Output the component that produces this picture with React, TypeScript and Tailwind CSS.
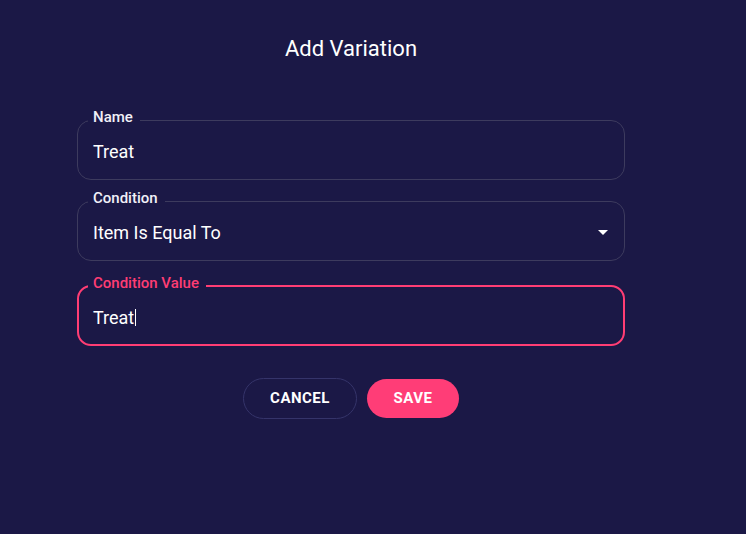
import { ReactNode } from "react";

const Field = ({
  label,
  focused = false,
  children,
}: {
  label: string;
  focused?: boolean;
  children: ReactNode;
}) => (
  <fieldset
    className={
      focused
        ? "rounded-[14px] border-2 border-[#ff3d74] pl-[14px] pr-[14px] pt-0 pb-[7px] m-0 min-w-0"
        : "rounded-[14px] border border-[#3d3b5e] pl-[15px] pr-[9px] pt-0 pb-[8px] m-0 min-w-0"
    }
  >
    <legend
      className={
        "ml-[-5px] pl-[5px] pr-[7px] pb-[6px] text-[15px] leading-4 font-medium " +
        (focused ? "text-[#ff3d74]" : "text-[#f1f0f8]")
      }
    >
      {label}
    </legend>
    <div className="h-[40px] flex items-center justify-between text-[18px] text-white">
      {children}
    </div>
  </fieldset>
);

export default function App() {
  return (
    <div
      className="w-full h-[534px] bg-[#1b1846] text-white"
      style={{ fontFamily: "Roboto, 'Liberation Sans', sans-serif" }}
    >
      <div className="ml-[77px] w-[548px] pt-[35px]">
        <h1 className="text-center text-[22px] leading-[28px] font-normal">Add Variation</h1>

        <div className="mt-[46px]">
          <Field label="Name">
            <span>Treat</span>
          </Field>
        </div>

        <div className="mt-[10px]">
          <Field label="Condition">
            <span>Item Is Equal To</span>
            <svg width="24" height="24" viewBox="0 0 24 24" fill="white">
              <path d="M7 10l5 5 5-5z" />
            </svg>
          </Field>
        </div>

        <div className="mt-[14px]">
          <Field label="Condition Value" focused>
            <span className="flex items-center">
              Treat
              <span className="inline-block w-px h-[17px] bg-white ml-[1px]" />
            </span>
          </Field>
        </div>

        <div className="mt-[32px] flex items-center justify-center gap-[10px]">
          <button className="h-[41px] w-[114px] rounded-full border border-[#35346a] text-[15px] font-bold tracking-[0.5px] text-white">
            CANCEL
          </button>
          <button className="h-[39px] w-[92px] rounded-full bg-[#ff3d77] text-[15px] font-bold tracking-[0.5px] text-white">
            SAVE
          </button>
        </div>
      </div>
    </div>
  );
}
